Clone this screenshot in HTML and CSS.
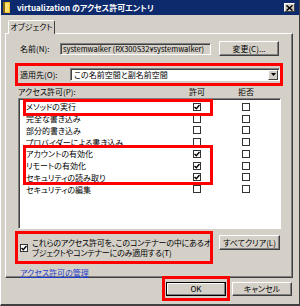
FILE: index.html
```html
<!DOCTYPE html>
<html lang="ja">
<head>
  <meta charset="UTF-8" />
  <title>virtualization のアクセス許可エントリ</title>
  <link rel="stylesheet" href="styles.css">
</head>
<body>
  <div class="dialogo">
    <div class="titulo">
      <svg class="titulo-icone" width="7" height="11" viewBox="0 0 7 11">
        <rect x="0" y="0" width="7" height="11" fill="#f0c020"/>
        <rect x="0" y="0" width="2" height="11" fill="#8a6a10"/>
        <rect x="2" y="1" width="4" height="9" fill="#ffe070"/>
      </svg>
      <span class="titulo-texto">virtualization のアクセス許可エントリ</span>
      <span class="fechar">
        <svg width="7" height="6" viewBox="0 0 7 6"><path d="M0.5 0.5 L6.5 5.5 M6.5 0.5 L0.5 5.5" stroke="#000" stroke-width="1.6"/></svg>
      </span>
    </div>

    <div class="abas">
      <div class="aba">オブジェクト</div>
    </div>

    <div class="painel">
      <div class="linha-nome">
        <span class="rotulo">名前(N):</span>
        <div class="campo-nome">systemwalker (RX300S32¥systemwalker)</div>
        <button class="botao botao-alterar">変更(C)...</button>
      </div>

      <div class="destaque linha-aplicar">
        <span class="rotulo">適用先(O):</span>
        <div class="combo">
          <span class="combo-texto">この名前空間と副名前空間</span>
          <span class="combo-seta">
            <svg width="5" height="3" viewBox="0 0 5 3"><path d="M0 0 H5 L2.5 3 Z" fill="#000"/></svg>
          </span>
        </div>
      </div>

      <div class="cabecalho-perm">
        <span>アクセス許可(P):</span>
        <span>許可</span>
        <span>拒否</span>
      </div>

      <div class="lista-perm" id="lista-perm">
        <div class="marca marca-1"></div>
        <div class="marca marca-2"></div>
      </div>

      <div class="linha-inferior">
        <div class="destaque caixa-aplicar">
          <span class="caixa caixa-marcada"></span>
          <span class="texto-aplicar">これらのアクセス許可を、このコンテナーの中にあるオ<br>ブジェクトやコンテナーにのみ適用する(T)</span>
        </div>
        <button class="botao botao-limpar">すべてクリア(L)</button>
      </div>

      <a class="link-gerenciar" href="#">アクセス許可の管理</a>
    </div>

    <div class="rodape">
      <div class="destaque destaque-ok">
        <button class="botao botao-ok">OK</button>
      </div>
      <button class="botao botao-cancelar">キャンセル</button>
    </div>
  </div>

  <script>
    const permissoes = [
      ['メソッドの実行', true, false],
      ['完全な書き込み', false, false],
      ['部分的書き込み', false, false],
      ['プロバイダーによる書き込み', false, false],
      ['アカウントの有効化', true, false],
      ['リモートの有効化', true, false],
      ['セキュリティの読み取り', true, false],
      ['セキュリティの編集', false, false]
    ];

    const lista = document.getElementById('lista-perm');
    permissoes.forEach(([nome, permitir, negar]) => {
      const linha = document.createElement('div');
      linha.className = 'linha-perm';
      linha.innerHTML =
        `<span class="nome-perm">${nome}</span>` +
        `<span class="caixa${permitir ? ' caixa-marcada' : ''}"></span>` +
        `<span class="caixa${negar ? ' caixa-marcada' : ''}"></span>`;
      lista.appendChild(linha);
    });
  </script>
</body>
</html>
```

FILE: styles.css
```css
* {
  box-sizing: border-box;
}

body {
  margin: 0;
  font-family: 'Noto Sans CJK JP', 'Liberation Sans', sans-serif;
  font-size: 8px;
  font-feature-settings: 'palt';
  color: #000;
  background: #d4d0c8;
}

.dialogo {
  width: 300px;
  height: 306px;
  background: #d4d0c8;
  border-left: 1px solid #ffffff;
  border-right: 1px solid #404040;
  border-bottom: 2px solid #404040;
  overflow: hidden;
}

.titulo {
  height: 15px;
  background: #0c2a6c;
  display: flex;
  align-items: center;
  padding: 0 4px 0 2px;
  color: #fff;
}

.titulo-icone {
  flex: none;
}

.titulo-texto {
  margin-left: 7px;
  font-weight: bold;
  font-size: 8px;
  white-space: nowrap;
  flex: 1;
}

.fechar {
  width: 11px;
  height: 9px;
  background: #d4d0c8;
  border: 1px solid;
  border-color: #fff #404040 #404040 #fff;
  display: flex;
  align-items: center;
  justify-content: center;
}

.abas {
  padding: 5px 0 0 7px;
  height: 19px;
}

.aba {
  width: 47px;
  height: 14px;
  border: 1px solid;
  border-bottom: none;
  border-color: #fff #404040 transparent #fff;
  border-radius: 2px 2px 0 0;
  background: #d4d0c8;
  text-align: center;
  line-height: 12px;
  position: relative;
  z-index: 1;
}

.painel {
  margin: -1px 0 0 4px;
  width: 288px;
  height: 245px;
  border: 1px solid;
  border-color: #fff #404040 #404040 #fff;
  box-shadow: inset -1px -1px #808080;
  padding: 0 8px 0 9px;
}

.rotulo {
  white-space: nowrap;
}

.linha-nome {
  display: flex;
  align-items: center;
  height: 15px;
  margin-top: 7px;
  padding-left: 5px;
}

.linha-nome .rotulo {
  width: 40px;
}

.campo-nome {
  width: 151px;
  height: 12px;
  border: 1px solid;
  border-color: #808080 #fff #fff #808080;
  box-shadow: inset 1px 1px #404040;
  padding-left: 2px;
  line-height: 10px;
  font-size: 7.5px;
  white-space: nowrap;
  overflow: hidden;
}

.botao {
  font-family: inherit;
  font-size: 8px;
  font-feature-settings: 'palt';
  background: #d4d0c8;
  border: 1px solid;
  border-color: #fff #404040 #404040 #fff;
  box-shadow: inset -1px -1px #808080;
  padding: 0;
  color: #000;
  line-height: 12px;
  height: 15px;
  white-space: nowrap;
}

.botao-alterar {
  width: 60px;
  margin-left: 8px;
}

.destaque {
  border: 3px solid #ff0000;
}

.linha-aplicar {
  margin-top: 7px;
  width: 268px;
  height: 23px;
  display: flex;
  align-items: center;
  padding-left: 2px;
}

.linha-aplicar .rotulo {
  width: 50px;
}

.combo {
  width: 210px;
  height: 13px;
  background: #fff;
  border: 1px solid;
  border-color: #808080 #fff #fff #808080;
  box-shadow: inset 1px 1px #404040;
  display: flex;
  align-items: center;
  padding-left: 3px;
}

.combo-texto {
  flex: 1;
  white-space: nowrap;
}

.combo-seta {
  width: 10px;
  height: 10px;
  margin-right: 1px;
  background: #d4d0c8;
  border: 1px solid;
  border-color: #fff #404040 #404040 #fff;
  display: flex;
  align-items: center;
  justify-content: center;
}

.cabecalho-perm {
  display: grid;
  grid-template-columns: 171px 49px auto;
  height: 12px;
  line-height: 12px;
  padding-left: 3px;
}

.lista-perm {
  position: relative;
  margin-left: 3px;
  width: 263px;
  height: 131px;
  background: #fff;
  border: 1px solid;
  border-color: #808080 #fff #fff #808080;
  box-shadow: inset 1px 1px #404040;
  padding-top: 2px;
}

.linha-perm {
  display: grid;
  grid-template-columns: 174px 49px auto;
  align-items: center;
  height: 11.75px;
}

.nome-perm {
  padding-left: 7px;
  white-space: nowrap;
}

.caixa {
  display: block;
  width: 8px;
  height: 8px;
  background: #fff;
  border: 1px solid #333;
}

.caixa-marcada {
  background: #fff url("data:image/svg+xml,%3Csvg xmlns='http://www.w3.org/2000/svg' width='6' height='6' viewBox='0 0 6 6'%3E%3Cpath d='M0.5 3 L2.3 4.8 L5.5 1' fill='none' stroke='%23000' stroke-width='1.4'/%3E%3C/svg%3E") center / 6px 6px no-repeat;
}

.marca {
  position: absolute;
  left: 4px;
  width: 190px;
  border: 3px solid #ff0000;
}

.marca-1 {
  top: 0;
  height: 17px;
}

.marca-2 {
  top: 46px;
  height: 40px;
}

.linha-inferior {
  display: flex;
  align-items: flex-start;
  margin-top: 2px;
}

.caixa-aplicar {
  width: 198px;
  height: 33px;
  display: flex;
  align-items: center;
  padding-left: 2px;
}

.caixa-aplicar .caixa {
  flex: none;
  margin-right: 4px;
}

.texto-aplicar {
  white-space: nowrap;
  line-height: 10px;
  letter-spacing: -0.2px;
}

.botao-limpar {
  width: 61px;
  margin: 4px 0 0 6px;
}

.link-gerenciar {
  display: inline-block;
  margin: 4px 0 0 5px;
  color: #1c3cc8;
  text-decoration: underline;
  line-height: 10px;
}

.rodape {
  display: flex;
  align-items: center;
  padding-left: 161px;
  margin-top: -2px;
}

.destaque-ok {
  width: 68px;
  height: 25px;
  display: flex;
  align-items: center;
  justify-content: center;
}

.botao-ok {
  width: 60px;
  height: 14px;
  border-color: #000;
  box-shadow: inset -1px -1px #808080, inset 1px 1px #fff;
}

.botao-cancelar {
  width: 60px;
  height: 14px;
  margin-left: 2px;
}
```
